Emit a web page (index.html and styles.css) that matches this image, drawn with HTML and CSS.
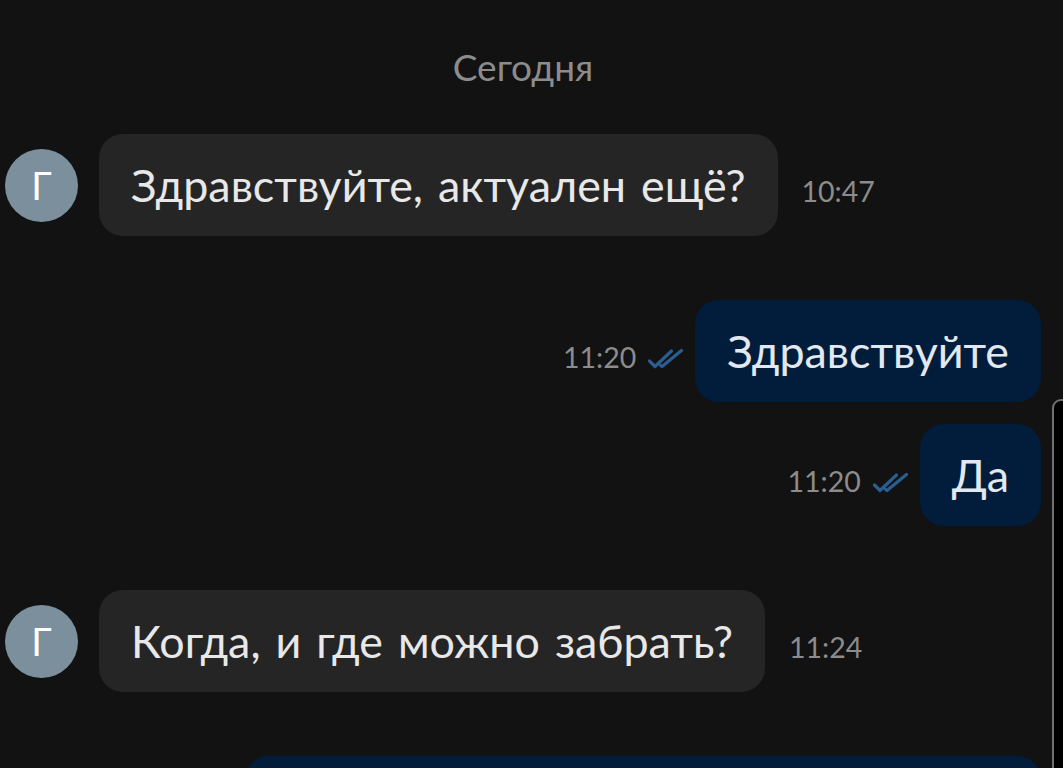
FILE: index.html
```html
<!DOCTYPE html>
<html lang="ru">
<head>
<meta charset="utf-8">
<title>Чат</title>
<link rel="stylesheet" href="styles.css">
</head>
<body>
<div class="chat">
  <div class="date">Сегодня</div>

  <div class="row in first">
    <div class="avatar">Г</div>
    <div class="line">
      <div class="bubble">Здравствуйте, актуален ещё?</div>
      <span class="time">10:47</span>
    </div>
  </div>

  <div class="row out gap-big">
    <div class="line">
      <span class="time">11:20</span>
      <svg class="check" viewBox="0 0 37 21" width="37" height="21"><path d="M2.5 14 L8 19.5 L24.5 4 M13.5 18.5 L15 19.5 L34.5 3.5" fill="none" stroke="#2a5d90" stroke-width="3.2" stroke-linecap="round" stroke-linejoin="round"/></svg>
      <div class="bubble">Здравствуйте</div>
    </div>
  </div>

  <div class="row out gap-small">
    <div class="line">
      <span class="time">11:20</span>
      <svg class="check" viewBox="0 0 37 21" width="37" height="21"><path d="M2.5 14 L8 19.5 L24.5 4 M13.5 18.5 L15 19.5 L34.5 3.5" fill="none" stroke="#2a5d90" stroke-width="3.2" stroke-linecap="round" stroke-linejoin="round"/></svg>
      <div class="bubble">Да</div>
    </div>
  </div>

  <div class="row in gap-big">
    <div class="avatar">Г</div>
    <div class="line">
      <div class="bubble">Когда, и где можно забрать?</div>
      <span class="time">11:24</span>
    </div>
  </div>

  <div class="row out gap-big">
    <div class="line">
      <div class="bubble wide">&nbsp;</div>
    </div>
  </div>
</div>
<div class="edge"></div>
</body>
</html>
```

FILE: styles.css
```css
html, body {
  margin: 0;
  padding: 0;
  background: #121212;
  height: 100%;
  overflow: hidden;
}
body {
  font-family: Lato, "Noto Sans", sans-serif;
  position: relative;
}
.chat {
  display: flex;
  flex-direction: column;
  padding: 44px 22px 0 5px;
}
.date {
  text-align: center;
  color: #8c8c8c;
  font-size: 37px;
  line-height: 46px;
}
.row {
  display: flex;
  align-items: center;
}
.row.first { margin-top: 44px; }
.row.gap-big { margin-top: 64px; }
.row.gap-small { margin-top: 22px; }
.row.out { justify-content: flex-end; }
.avatar {
  width: 73px;
  height: 73px;
  border-radius: 50%;
  background: #7b909c;
  color: #ffffff;
  font-size: 38px;
  display: flex;
  align-items: center;
  justify-content: center;
  margin-right: 21px;
  flex: none;
}
.line {
  display: flex;
  align-items: baseline;
}
.bubble {
  height: 102px;
  box-sizing: border-box;
  padding: 0 32px;
  line-height: 102px;
  font-size: 44.8px;
  word-spacing: 3.5px;
  border-radius: 24px;
  white-space: nowrap;
}
.in .bubble {
  background: #252525;
  color: #e8e8e8;
}
.out .bubble {
  background: #021d3b;
  color: #e2e8ef;
}
.bubble.wide { width: 796px; }
.time {
  font-size: 28.5px;
  color: #8c8c8c;
}
.in .time { margin-left: 24px; }
.check {
  margin: 0 11px 0 11px;
  overflow: visible;
  flex: none;
}
.edge {
  position: absolute;
  left: 1052px;
  top: 399px;
  right: -10px;
  bottom: -10px;
  background: #000;
  border: 2px solid #707070;
  border-top-left-radius: 9px;
}
```
